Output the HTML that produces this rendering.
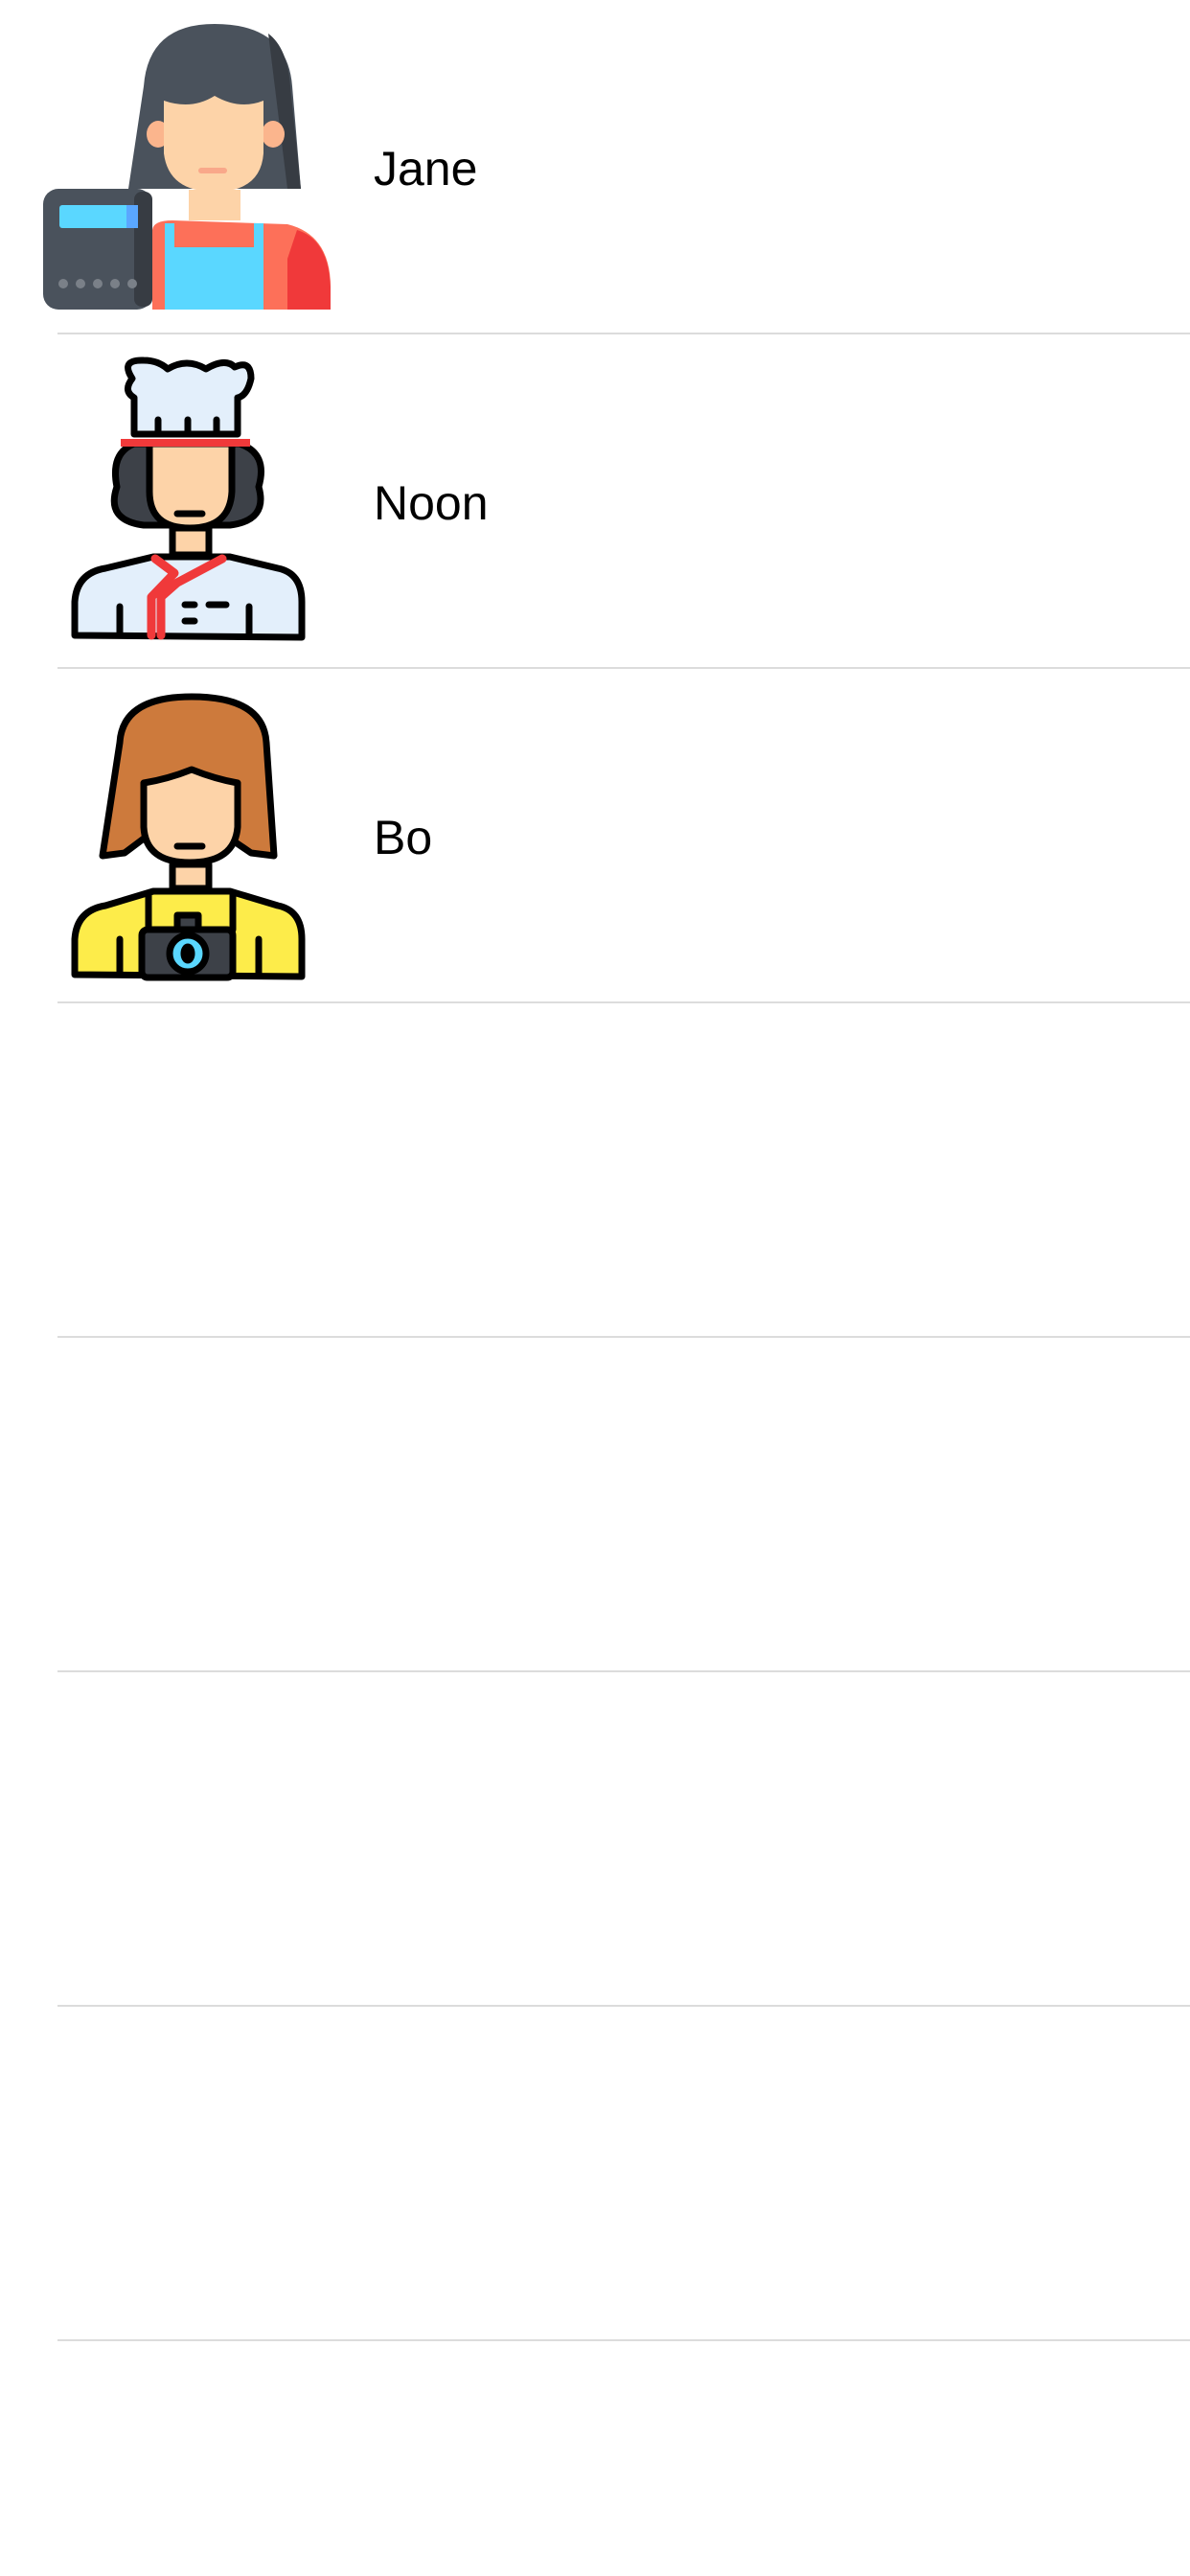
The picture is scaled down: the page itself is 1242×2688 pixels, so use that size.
<!DOCTYPE html>
<html><head><meta charset="utf-8"><style>
html,body{margin:0;padding:0;background:#fff;width:1242px;height:2688px;overflow:hidden;font-family:"Liberation Sans",sans-serif}
.sep{position:absolute;left:60px;right:0;height:2px;background:#dcdcdc}
.t{position:absolute;left:390px;font-size:50px;color:#000;line-height:50px}
svg{position:absolute;left:0;top:0}
</style></head><body>
<div class="sep" style="top:347px"></div>
<div class="sep" style="top:696px"></div>
<div class="sep" style="top:1045px"></div>
<div class="sep" style="top:1394px"></div>
<div class="sep" style="top:1743px"></div>
<div class="sep" style="top:2092px"></div>
<div class="sep" style="top:2441px"></div>
<div class="t" style="top:151px">Jane</div>
<div class="t" style="top:500px">Noon</div>
<div class="t" style="top:849px">Bo</div>
<svg width="1242" height="1100" viewBox="0 0 1242 1100">
<!-- Jane -->
<path d="M150 90 Q155 25 224 25 Q300 25 305 90 L314 197 L134 197 Z" fill="#4a525c"/>
<path d="M280 35 Q300 50 303 90 L314 197 L300 197 Z" fill="#373c43"/>
<ellipse cx="165" cy="140" rx="12" ry="14" fill="#fbb58d"/>
<ellipse cx="285" cy="140" rx="12" ry="14" fill="#fbb58d"/>
<path d="M171 105 Q200 115 224 100 Q250 115 275 105 L275 160 Q272 200 224 200 Q176 200 171 160 Z" fill="#fdd3a8"/>
<rect x="207" y="175" width="30" height="6" rx="3" fill="#f9a88a"/>
<rect x="197" y="198" width="54" height="32" fill="#fdd3a8"/>
<path d="M159 240 Q160 230 180 230 L300 234 Q345 245 345 300 L345 323 L159 323 Z" fill="#fd7059"/>
<path d="M310 240 Q343 250 345 300 L345 323 L300 323 L300 270 Z" fill="#f0393a"/>
<path d="M172 233 L182 233 L182 258 L265 258 L265 233 L275 233 L275 323 L172 323 Z" fill="#5ad7ff"/>
<rect x="285" y="280" width="12" height="43" fill="#fd7059"/>
<rect x="45" y="197" width="114" height="126" rx="16" fill="#4a525c"/>
<rect x="140" y="200" width="19" height="120" rx="8" fill="#373c43"/>
<rect x="62" y="214" width="82" height="24" rx="3" fill="#5ad7ff"/>
<rect x="132" y="214" width="12" height="24" fill="#5aa7ff"/>
<g fill="#7a8088"><circle cx="66" cy="296" r="5"/><circle cx="84" cy="296" r="5"/><circle cx="102" cy="296" r="5"/><circle cx="120" cy="296" r="5"/><circle cx="138" cy="296" r="5"/></g>
<!-- Noon -->
<g transform="translate(0,3)">
<g stroke="#000" stroke-width="7" stroke-linejoin="round" stroke-linecap="round">
<path d="M122 505 Q115 470 140 460 L250 460 Q280 470 270 505 Q280 540 240 545 L150 545 Q110 540 122 505 Z" fill="#3d4148"/>
<path d="M138 392 Q125 372 150 373 Q165 373 175 382 Q195 370 215 382 Q235 370 245 380 Q262 372 262 392 Q258 410 248 412 L248 450 L140 450 L140 412 Q128 405 138 392 Z" fill="#e3effb"/>
<path d="M165 435 L165 448 M196 435 L196 448 M226 435 L226 448" fill="none"/>
<path d="M156 460 L242 460 L242 510 Q240 548 198 548 Q156 548 156 510 Z" fill="#fdd3a8"/>
<path d="M185 533 L211 533" fill="none"/>
<rect x="180" y="548" width="38" height="28" fill="#fdd3a8"/>
<path d="M78 660 L78 625 Q80 595 110 590 L160 578 L240 578 L290 590 Q315 595 315 625 L315 662 Z" fill="#e3effb"/>
<path d="M162 580 L182 595 L158 620 L158 660 M232 580 L185 605 L168 620 L168 660" fill="none" stroke="#f0393a" stroke-width="9"/>
<path d="M193 628 L203 628 M218 628 L236 628 M193 645 L203 645 M125 630 L125 660 M260 630 L260 660" fill="none"/>
</g>
<rect x="126" y="455" width="135" height="8" fill="#f0393a"/>
</g>
<!-- Bo -->
<g transform="translate(0,5)">
<g stroke="#000" stroke-width="7" stroke-linejoin="round" stroke-linecap="round">
<path d="M125 770 Q128 722 200 722 Q275 722 278 770 L286 888 L262 885 L240 870 L150 870 L130 885 L107 888 Z" fill="#cd7a3c"/>
<path d="M150 812 Q175 808 200 798 Q225 808 248 812 L248 858 Q245 895 198 895 Q152 895 150 858 Z" fill="#fdd3a8"/>
<path d="M185 878 L211 878" fill="none"/>
<rect x="180" y="897" width="38" height="25" fill="#fdd3a8"/>
<path d="M78 1012 L78 975 Q80 945 110 940 L160 925 L240 925 L290 940 Q315 945 315 975 L315 1014 Z" fill="#fdec4a"/>
<path d="M155 928 L155 965 M243 928 L243 965 M125 975 L125 1010 M270 975 L270 1010" fill="none"/>
<rect x="148" y="965" width="95" height="50" rx="6" fill="#3d4148"/>
<rect x="185" y="950" width="22" height="15" fill="#3d4148"/>
<circle cx="196" cy="990" r="19" fill="#5ad7ff"/>
<ellipse cx="196" cy="990" rx="4" ry="7" fill="#000"/>
</g>
</g>
</svg>
</body></html>
